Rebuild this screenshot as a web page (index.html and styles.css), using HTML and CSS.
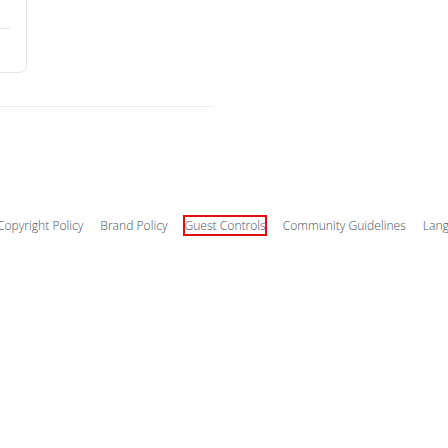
FILE: index.html
```html
<!DOCTYPE html>
<html>
<head>
<meta charset="utf-8">
<link rel="stylesheet" href="styles.css">
</head>
<body>
<div class="page">
  <div class="card">
    <div class="card-divider"></div>
  </div>
  <div class="rule"></div>
  <nav class="footer-links">
    <a class="link">Copyright Policy</a>
    <a class="link">Brand Policy</a>
    <a class="link focused">Guest Controls</a>
    <a class="link">Community Guidelines</a>
    <a class="link">Language</a>
  </nav>
</div>
</body>
</html>
```
FILE: styles.css
```css
html, body {
  margin: 0;
  padding: 0;
  background: #ffffff;
  overflow: hidden;
  width: 448px;
  height: 448px;
}
.page {
  display: flex;
  flex-direction: column;
  font-family: "Open Sans", "Noto Sans", sans-serif;
}
.card {
  width: 62px;
  height: 93px;
  margin-top: -20px;
  margin-left: -35px;
  border: 1px solid #e6e6e6;
  border-radius: 8px;
  box-sizing: border-box;
  padding-top: 47px;
}
.card-divider {
  height: 1px;
  background: #e6e6e6;
  margin-right: 16px;
}
.rule {
  width: 213px;
  height: 1px;
  background: #ebebeb;
  margin-top: 33px;
}
.footer-links {
  display: flex;
  gap: 17px;
  margin-top: 109px;
  margin-left: -3px;
  white-space: nowrap;
  font-size: 12.1px;
  font-weight: 300;
  line-height: 19px;
  color: #465163;
}
.link {
  display: inline-block;
  height: 19px;
}
.focused {
  outline: 2px solid #e01010;
  outline-offset: -1px;
}
```
